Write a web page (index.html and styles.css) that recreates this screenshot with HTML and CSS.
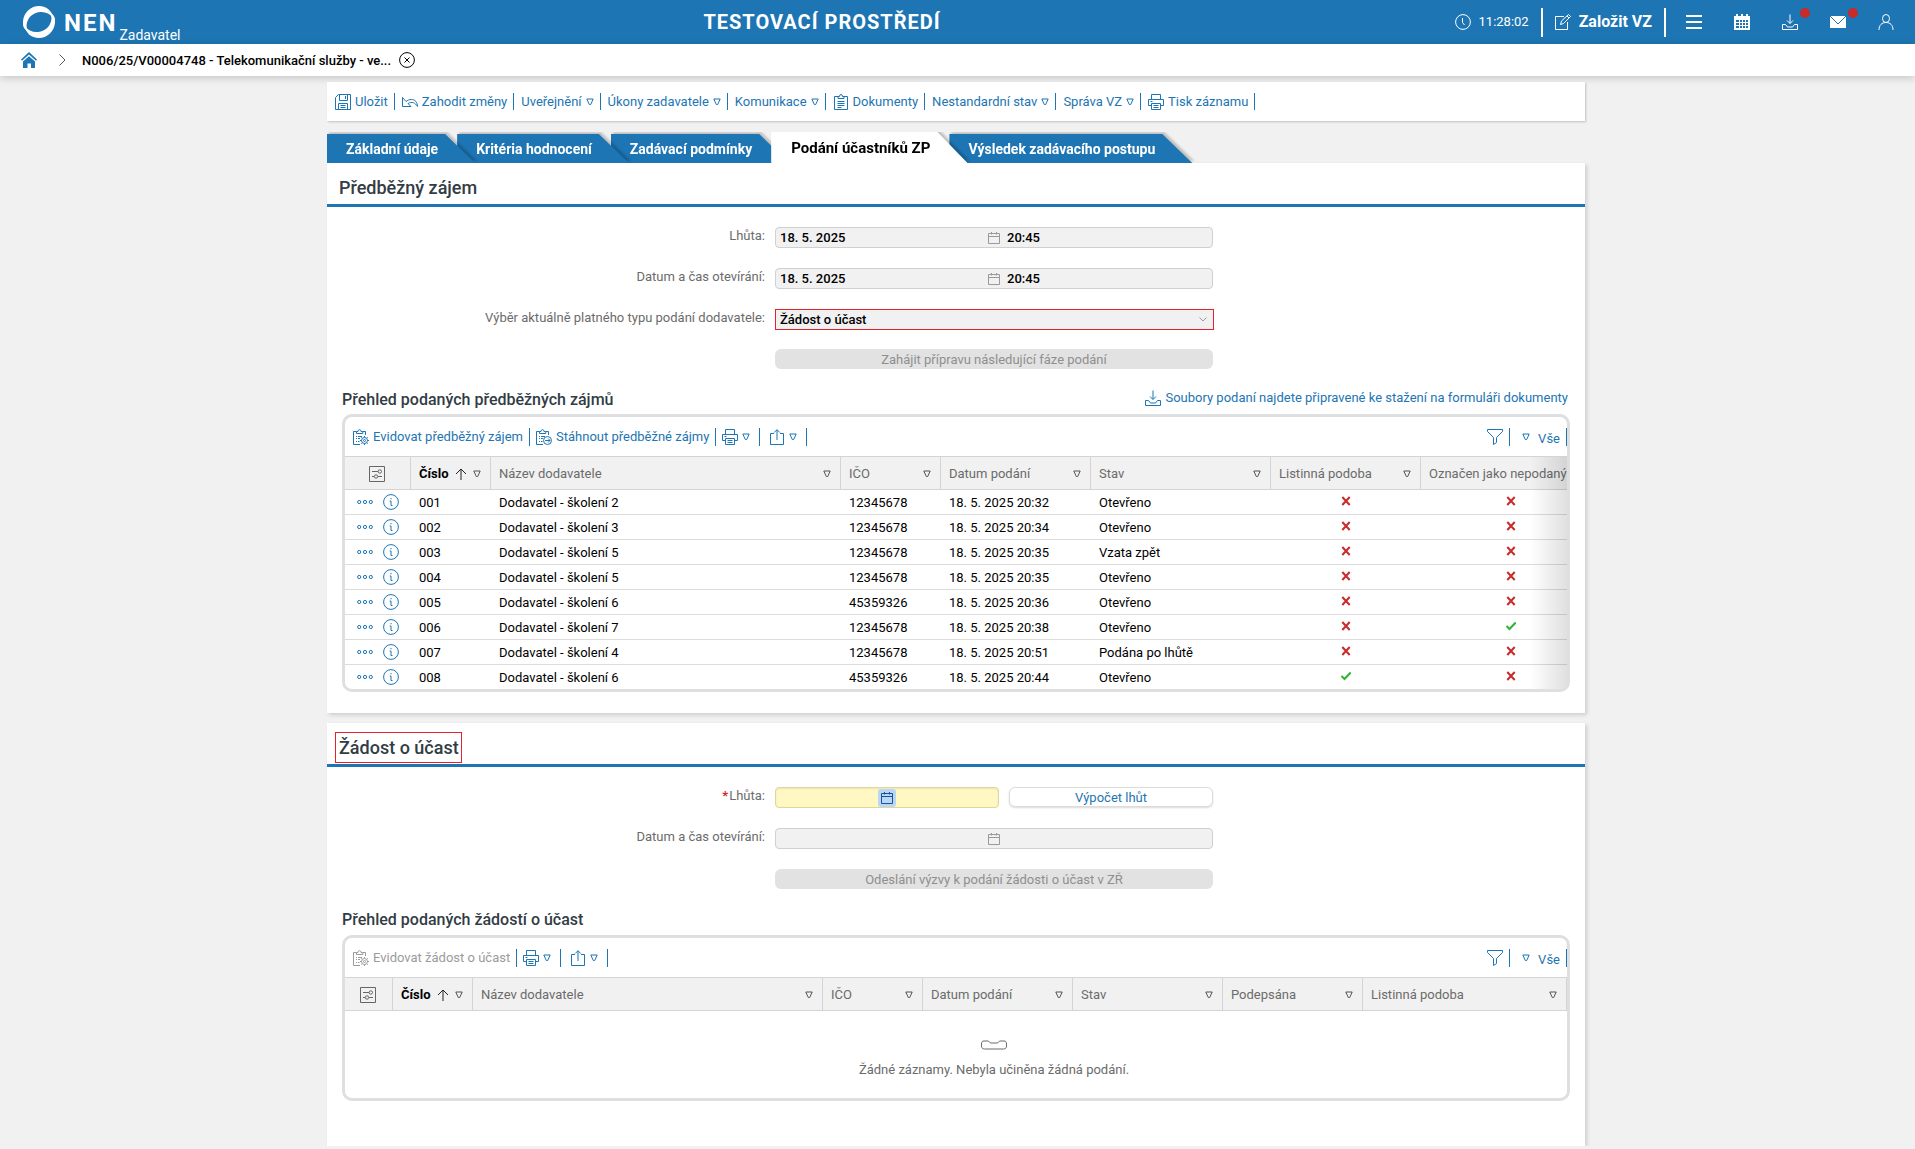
FILE: index.html
```html
<!DOCTYPE html>
<html lang="cs">
<head>
<meta charset="utf-8">
<meta name="viewport" content="width=device-width, initial-scale=1">
<title>NEN – Podání účastníků ZP</title>
<link rel="stylesheet" href="styles.css">
</head>
<body>
<svg class="sprite" aria-hidden="true">
  <symbol id="tri" viewBox="0 0 8 8"><path d="M.8 1h6.4L4.7 6.5H3.3z"/></symbol>
  <symbol id="save" viewBox="0 0 16 16"><path d="M3.500.5h12v15H.5V3.500zM4.500 1v5.500h8V1M10.500 2v3M3.500 15.500v-6h9v6M5.500 11.500h5M5.500 13.500h5"/></symbol>
  <symbol id="undo" viewBox="0 0 16 16"><path d="M.5 3.500v9h8.500L6 9.500c4-2.200 7-1 9.500 3C15.300 8 13 5.500 9.500 5.500c-2.200 0-4 .8-5.500 2z"/></symbol>
  <symbol id="clip" viewBox="0 0 14 16"><path d="M4 2.500H.5v13h13v-13H10M4 4.500v-2h1.500a1.500 2 0 0 1 3 0H10v2zM3.500 7.500h7M3.500 9.500h7M3.500 11.500h7M3.500 13.500h4"/></symbol>
  <symbol id="print" viewBox="0 0 16 16"><path d="M3.500 5V.5h9V5M3.500 11.500h-3V5.500h15v6h-3M3.500 9.500h9v6h-9zM5.500 11.500h5M5.500 13.500h5M2.500 7.500h2"/></symbol>
  <symbol id="clipgear" viewBox="0 0 16 16"><path d="M3.500 2.500h-3v13H7M10 2.500h2.500V6M3.500 4.500v-2H5a1.500 1.800 0 0 1 3 0h1.800v2zM3 7.500h1M5 7.500h4M3 9.500h1M5 9.500h2M3 12.500h1M5 12.500h1.500"/><circle cx="11.500" cy="11.500" r="3"/><circle cx="11.500" cy="11.500" r="1"/><path d="M11.500 7v1.500M11.500 14.500V16M7 11.500h1.500M14.500 11.500H16M8.300 8.300l1 1M13.700 13.700l1 1M14.700 8.300l-1 1M9.300 13.700l-1 1"/></symbol>
  <symbol id="cliparrow" viewBox="0 0 16 16"><path d="M3.500 2.500h-3v13H7M10 2.500h2.500V6M3.500 4.500v-2H5a1.500 1.800 0 0 1 3 0h1.800v2zM3 7.500h1M5 7.500h4M3 9.500h1M5 9.500h2M3 12.500h1M5 12.500h1.500"/><circle cx="11.500" cy="11.500" r="4"/><path d="M9 11.500h5M12 9.500l2 2-2 2"/></symbol>
  <symbol id="share" viewBox="0 0 14 16"><path d="M4 4.500H.5v11h13v-11H10M7 11V.8M4.200 3.500L7 .7l2.800 2.800"/></symbol>
  <symbol id="filter" viewBox="0 0 16 16"><path d="M.5.500h15v2L9.500 8.500v5l-3 2v-7L.5 2.500z"/></symbol>
  <symbol id="cols" viewBox="0 0 16 16"><path d="M.5.500h15v15H.5zM3 5.500h6M3 10.500h2M9 10.500h4"/><circle cx="10.800" cy="5.500" r="1.700"/><circle cx="7" cy="10.500" r="1.700"/></symbol>
  <symbol id="up" viewBox="0 0 12 12"><path d="M6 12V1M1 6l5-5 5 5"/></symbol>
  <symbol id="dots" viewBox="0 0 16 6"><circle cx="2.200" cy="3" r="1.600"/><circle cx="8" cy="3" r="1.600"/><circle cx="13.800" cy="3" r="1.600"/></symbol>
  <symbol id="info" viewBox="0 0 16 16"><circle cx="8" cy="8" r="7.400"/><path d="M8 4v1.300M6.700 7H8v4.500h1.500"/></symbol>
  <symbol id="cal" viewBox="0 0 12 12"><path d="M.5 1.500h11v10H.5zM.5 4.500h11M3.500 0v2.500M8.500 0v2.500"/></symbol>
  <symbol id="x" viewBox="0 0 10 10"><path d="M1.300 1l7.400 8M8.700 1L1.300 9"/></symbol>
  <symbol id="ok" viewBox="0 0 10 10"><path d="M.5 5l3 3L9.700 1.500"/></symbol>
  <symbol id="dl" viewBox="0 0 16 16"><path d="M8 .5v8.800M5 6.500l3 3 3-3M3.500 10.500h-3v5h15v-5h-3l-2 2.500h-5z"/></symbol>
</svg>

<header class="top">
  <a class="brand" href="#">
    <svg class="logo" viewBox="0 0 32 32"><path d="M0 19C-1 8 7 0 16 0c8 0 13 5 14.500 12C27 7.500 22 5.500 17 6 9 7 4.500 12 3.500 19c0 2 .5 4 1.500 6-3-1-4.500-3-5-6z"/><path d="M32 13c1 11-7 19-16 19-8 0-13-5-14.500-12C5 24.500 10 26.500 15 26c8-1 12.500-6 13.500-13 0-2-.5-4-1.500-6 3 1 4.500 3 5 6z"/></svg>
    <span class="name">NEN</span><span class="role">Zadavatel</span>
  </a>
  <strong class="env">TESTOVACÍ PROSTŘEDÍ</strong>
  <div class="tools">
    <span class="clock"><svg class="i16" viewBox="0 0 16 16"><circle cx="8" cy="8" r="7.400"/><path d="M7.500 4v4.500L9.500 11"/></svg><time>11:28:02</time></span>
    <button class="create"><svg class="i16" viewBox="0 0 16 16"><path d="M9 2.500H.5v13h12V8M5.500 10.500l1-3.500 7-6.500 2 2-7 7zM12 2l2 2"/></svg>Založit VZ</button>
    <button class="ic" aria-label="Menu"><svg class="i16 thick" viewBox="0 0 16 16"><path d="M0 2h16M0 8h16M0 14h16"/></svg></button>
    <button class="ic" aria-label="Kalendář"><svg class="i16" viewBox="0 0 16 16"><path class="solid" fill-rule="evenodd" d="M0 2h2V0h2v2h3V0h2v2h3V0h2v2h2v14H0zm2 4v8h12V6z"/><path d="M2 8.500h12M2 11.500h12M5.500 6v8M8.500 6v8M11.500 6v8"/></svg></button>
    <button class="ic" aria-label="Stažené soubory"><svg class="i16"><use href="#dl"/></svg><i class="badge"></i></button>
    <button class="ic" aria-label="Zprávy"><svg class="i16 wide" viewBox="0 0 18 16"><path class="solid" d="M1 2h16v12H1z"/><path class="flap" d="M1 2l8 8 8-8"/></svg><i class="badge"></i></button>
    <button class="ic" aria-label="Uživatel"><svg class="i16" viewBox="0 0 16 16"><ellipse cx="8" cy="4.500" rx="3.500" ry="4"/><path d="M1 16c0-5 3-7.500 7-7.500s7 2.500 7 7.500"/></svg></button>
  </div>
</header>

<nav class="crumbs" aria-label="Navigace">
  <a href="#" aria-label="Domů"><svg class="home" viewBox="0 0 16 16"><path d="M0 7.500L8 0l8 7.500-1 1.300L8 2.500 1 8.800zM2 9.500l6-5.200 6 5.200V16h-4v-4.500H6.500V16H2z"/></svg></a>
  <svg class="chev" viewBox="0 0 7 12"><path d="M.5.500L6 6 .5 11.500"/></svg>
  <a class="record" href="#">N006/25/V00004748 - Telekomunikační služby - ve...</a>
  <button class="close" aria-label="Zavřít"><svg viewBox="0 0 16 16"><circle cx="8" cy="8" r="7.400"/><path d="M5.500 5.500l5 5M10.500 5.500l-5 5"/></svg></button>
</nav>

<div class="wrap">
<main class="page">
  <div class="bar">
    <button><svg class="i16"><use href="#save"/></svg>Uložit</button>
    <button><svg class="i16"><use href="#undo"/></svg>Zahodit změny</button>
    <button>Uveřejnění<svg class="tri"><use href="#tri"/></svg></button>
    <button>Úkony zadavatele<svg class="tri"><use href="#tri"/></svg></button>
    <button>Komunikace<svg class="tri"><use href="#tri"/></svg></button>
    <button><svg class="i16"><use href="#clip"/></svg>Dokumenty</button>
    <button>Nestandardní stav<svg class="tri"><use href="#tri"/></svg></button>
    <button>Správa VZ<svg class="tri"><use href="#tri"/></svg></button>
    <button><svg class="i16"><use href="#print"/></svg>Tisk záznamu</button>
  </div>

  <nav class="tabs" aria-label="Záložky">
    <div class="tab t1"><a href="#">Základní údaje</a></div>
    <div class="tab t2"><a href="#">Kritéria hodnocení</a></div>
    <div class="tab t3"><a href="#">Zadávací podmínky</a></div>
    <div class="tab active"><a href="#" aria-current="page">Podání účastníků ZP</a></div>
    <div class="tab"><a href="#">Výsledek zadávacího postupu</a></div>
  </nav>

  <section class="panel">
    <h2><span>Předběžný zájem</span></h2>
    <form class="form">
      <label for="p-date">Lhůta:</label>
      <div class="field"><input id="p-date" value="18. 5. 2025" readonly><svg class="cal"><use href="#cal"/></svg><input aria-label="Lhůta – čas" value="20:45" readonly></div>
      <label for="p-open">Datum a čas otevírání:</label>
      <div class="field"><input id="p-open" value="18. 5. 2025" readonly><svg class="cal"><use href="#cal"/></svg><input aria-label="Otevírání – čas" value="20:45" readonly></div>
      <label for="p-type">Výběr aktuálně platného typu podání dodavatele:</label>
      <div class="select"><select id="p-type"><option>Žádost o účast</option></select><svg viewBox="0 0 8 5"><path d="M.5.500L4 4 7.500.500"/></svg></div>
      <button type="button" class="off" disabled>Zahájit přípravu následující fáze podání</button>
    </form>

    <div class="title"><h3>Přehled podaných předběžných zájmů</h3><a href="#"><svg class="i16"><use href="#dl"/></svg>Soubory podaní najdete připravené ke stažení na formuláři dokumenty</a></div>
    <div class="grid fade">
      <div class="gbar">
        <button><svg class="i16"><use href="#clipgear"/></svg>Evidovat předběžný zájem</button>
        <button><svg class="i16"><use href="#cliparrow"/></svg>Stáhnout předběžné zájmy</button>
        <button class="menu" aria-label="Tisk"><svg class="i16"><use href="#print"/></svg><svg class="tri"><use href="#tri"/></svg></button>
        <button class="menu" aria-label="Export"><svg class="i16"><use href="#share"/></svg><svg class="tri"><use href="#tri"/></svg></button>
        <button class="filter" aria-label="Filtr"><svg class="i16"><use href="#filter"/></svg></button>
        <button class="all"><svg class="tri"><use href="#tri"/></svg><span>Vše</span></button>
      </div>
      <table class="wide">
        <colgroup><col class="w66"><col class="w80"><col class="w350"><col class="w100"><col class="w150"><col class="w180"><col class="w150"><col class="w180"></colgroup>
        <thead><tr>
          <th><button aria-label="Nastavení sloupců"><svg class="i16"><use href="#cols"/></svg></button></th>
          <th class="sorted"><div>Číslo<svg class="up"><use href="#up"/></svg><svg class="tri"><use href="#tri"/></svg></div></th>
          <th><div>Název dodavatele<svg class="tri"><use href="#tri"/></svg></div></th>
          <th><div>IČO<svg class="tri"><use href="#tri"/></svg></div></th>
          <th><div>Datum podání<svg class="tri"><use href="#tri"/></svg></div></th>
          <th><div>Stav<svg class="tri"><use href="#tri"/></svg></div></th>
          <th><div>Listinná podoba<svg class="tri"><use href="#tri"/></svg></div></th>
          <th><div>Označen jako nepodaný</div></th>
        </tr></thead>
        <tbody>
          <tr><td class="act"><svg class="dots"><use href="#dots"/></svg><svg class="i16"><use href="#info"/></svg></td><td>001</td><td>Dodavatel - školení 2</td><td>12345678</td><td>18. 5. 2025 20:32</td><td>Otevřeno</td><td class="flag"><svg class="no"><use href="#x"/></svg></td><td class="flag"><svg class="no"><use href="#x"/></svg></td></tr>
          <tr><td class="act"><svg class="dots"><use href="#dots"/></svg><svg class="i16"><use href="#info"/></svg></td><td>002</td><td>Dodavatel - školení 3</td><td>12345678</td><td>18. 5. 2025 20:34</td><td>Otevřeno</td><td class="flag"><svg class="no"><use href="#x"/></svg></td><td class="flag"><svg class="no"><use href="#x"/></svg></td></tr>
          <tr><td class="act"><svg class="dots"><use href="#dots"/></svg><svg class="i16"><use href="#info"/></svg></td><td>003</td><td>Dodavatel - školení 5</td><td>12345678</td><td>18. 5. 2025 20:35</td><td>Vzata zpět</td><td class="flag"><svg class="no"><use href="#x"/></svg></td><td class="flag"><svg class="no"><use href="#x"/></svg></td></tr>
          <tr><td class="act"><svg class="dots"><use href="#dots"/></svg><svg class="i16"><use href="#info"/></svg></td><td>004</td><td>Dodavatel - školení 5</td><td>12345678</td><td>18. 5. 2025 20:35</td><td>Otevřeno</td><td class="flag"><svg class="no"><use href="#x"/></svg></td><td class="flag"><svg class="no"><use href="#x"/></svg></td></tr>
          <tr><td class="act"><svg class="dots"><use href="#dots"/></svg><svg class="i16"><use href="#info"/></svg></td><td>005</td><td>Dodavatel - školení 6</td><td>45359326</td><td>18. 5. 2025 20:36</td><td>Otevřeno</td><td class="flag"><svg class="no"><use href="#x"/></svg></td><td class="flag"><svg class="no"><use href="#x"/></svg></td></tr>
          <tr><td class="act"><svg class="dots"><use href="#dots"/></svg><svg class="i16"><use href="#info"/></svg></td><td>006</td><td>Dodavatel - školení 7</td><td>12345678</td><td>18. 5. 2025 20:38</td><td>Otevřeno</td><td class="flag"><svg class="no"><use href="#x"/></svg></td><td class="flag"><svg class="yes"><use href="#ok"/></svg></td></tr>
          <tr><td class="act"><svg class="dots"><use href="#dots"/></svg><svg class="i16"><use href="#info"/></svg></td><td>007</td><td>Dodavatel - školení 4</td><td>12345678</td><td>18. 5. 2025 20:51</td><td>Podána po lhůtě</td><td class="flag"><svg class="no"><use href="#x"/></svg></td><td class="flag"><svg class="no"><use href="#x"/></svg></td></tr>
          <tr><td class="act"><svg class="dots"><use href="#dots"/></svg><svg class="i16"><use href="#info"/></svg></td><td>008</td><td>Dodavatel - školení 6</td><td>45359326</td><td>18. 5. 2025 20:44</td><td>Otevřeno</td><td class="flag"><svg class="yes"><use href="#ok"/></svg></td><td class="flag"><svg class="no"><use href="#x"/></svg></td></tr>
        </tbody>
      </table>
    </div>
  </section>

  <section class="panel last">
    <h2><span class="marked">Žádost o účast</span></h2>
    <form class="form">
      <label for="z-date"><b>*</b>Lhůta:</label>
      <div class="pair">
        <div class="field required"><input id="z-date"><svg class="cal"><use href="#cal"/></svg><input aria-label="Lhůta – čas"></div>
        <button type="button" class="calc">Výpočet lhůt</button>
      </div>
      <label for="z-open">Datum a čas otevírání:</label>
      <div class="field"><input id="z-open" readonly><svg class="cal"><use href="#cal"/></svg><input aria-label="Otevírání – čas" readonly></div>
      <button type="button" class="off" disabled>Odeslání výzvy k podání žádosti o účast v ZŘ</button>
    </form>

    <div class="title"><h3>Přehled podaných žádostí o účast</h3></div>
    <div class="grid">
      <div class="gbar">
        <button disabled><svg class="i16"><use href="#clipgear"/></svg>Evidovat žádost o účast</button>
        <button class="menu" aria-label="Tisk"><svg class="i16"><use href="#print"/></svg><svg class="tri"><use href="#tri"/></svg></button>
        <button class="menu" aria-label="Export"><svg class="i16"><use href="#share"/></svg><svg class="tri"><use href="#tri"/></svg></button>
        <button class="filter" aria-label="Filtr"><svg class="i16"><use href="#filter"/></svg></button>
        <button class="all"><svg class="tri"><use href="#tri"/></svg><span>Vše</span></button>
      </div>
      <table>
        <colgroup><col class="w48"><col class="w80"><col class="w350"><col class="w100"><col class="w150"><col class="w150"><col class="w140"><col></colgroup>
        <thead><tr>
          <th><button aria-label="Nastavení sloupců"><svg class="i16"><use href="#cols"/></svg></button></th>
          <th class="sorted"><div>Číslo<svg class="up"><use href="#up"/></svg><svg class="tri"><use href="#tri"/></svg></div></th>
          <th><div>Název dodavatele<svg class="tri"><use href="#tri"/></svg></div></th>
          <th><div>IČO<svg class="tri"><use href="#tri"/></svg></div></th>
          <th><div>Datum podání<svg class="tri"><use href="#tri"/></svg></div></th>
          <th><div>Stav<svg class="tri"><use href="#tri"/></svg></div></th>
          <th><div>Podepsána<svg class="tri"><use href="#tri"/></svg></div></th>
          <th><div>Listinná podoba<svg class="tri"><use href="#tri"/></svg></div></th>
        </tr></thead>
      </table>
      <div class="empty">
        <svg viewBox="0 0 26 10"><path d="M3 1h4c1 0 1.500 2 3 2h6c1.500 0 2-2 3-2h4c2 0 2.500 1 2.500 3v2c0 2-1 3-3 3H3.500c-2 0-3-1-3-3V4C.5 2 1 1 3 1z"/></svg>
        <p>Žádné záznamy. Nebyla učiněna žádná podání.</p>
      </div>
    </div>
  </section>
</main>
</div>
</body>
</html>
```

FILE: styles.css
```css
:root {
  --blue: #1d75b3;
  --line: #d4d4d4;
  --frame: #dddfe0;
  --muted: #6b6b6b;
  --bg: #f1f1f1;
}

* { box-sizing: border-box; }

body {
  margin: 0;
  background: var(--bg);
  color: #000;
  font: 13px/16px Roboto, "Liberation Sans", sans-serif;
}

a { color: var(--blue); text-decoration: none; }
h2, h3, p { margin: 0; }
button, input, select { font: inherit; color: inherit; }
button { margin: 0; padding: 0; border: 0; background: none; color: var(--blue); white-space: nowrap; }
svg { display: block; flex: none; fill: none; stroke: currentColor; stroke-width: 1; }

.sprite { position: absolute; width: 0; height: 0; }
.i16 { width: 16px; height: 16px; }
.tri { width: 8px; height: 8px; }

/* Top bar */
.top {
  display: flex;
  align-items: center;
  justify-content: space-between;
  height: 44px;
  padding: 0 21px 0 23px;
  background: var(--blue);
  color: #fff;
}
.top button { color: #fff; }
.brand { display: flex; align-items: center; height: 44px; color: #fff; }
.logo { width: 32px; height: 32px; margin-right: 9px; fill: #fff; stroke: none; }
.name { padding-top: 2px; font-size: 24px; line-height: 28px; font-weight: 700; letter-spacing: 2px; }
.role { align-self: flex-end; padding: 0 0 2px 2px; font-size: 14px; line-height: 14px; }
.env { padding-left: 9px; font-size: 20px; line-height: 24px; letter-spacing: 1px; }
.tools { display: flex; align-items: center; }
.clock { display: flex; align-items: center; gap: 8px; padding-right: 12px; }
.create {
  display: flex;
  align-items: center;
  gap: 8px;
  height: 29px;
  margin-right: 20px;
  padding: 0 12px;
  border: solid #fff;
  border-width: 0 2px;
  font-size: 16px;
  font-weight: 700;
}
.ic { position: relative; margin-left: 32px; }
.create + .ic { margin-left: 0; }
.thick { stroke-width: 2; }
.wide.i16 { width: 18px; margin: 0 -1px; }
.solid { fill: #fff; stroke: none; }
.flap { stroke: var(--blue); }
.badge { position: absolute; top: -6px; right: -12px; width: 10px; height: 10px; border-radius: 50%; background: #c92a2a; }

/* Breadcrumbs */
.crumbs {
  display: flex;
  align-items: center;
  height: 32px;
  padding: 0 21px;
  background: #fff;
  box-shadow: 0 2px 8px rgba(0, 0, 0, .18);
}
.home { width: 16px; height: 16px; fill: var(--blue); stroke: none; }
.chev { width: 7px; height: 12px; margin: 0 16px 0 22px; color: #555; }
.record { padding-top: 1px; color: #000; font-weight: 500; }
.close { margin-left: 8px; color: #000; }
.close svg { width: 16px; height: 16px; }

/* Page column */
.wrap { padding: 6px 3px 0 0; }
.page { max-width: 1258px; margin: 0 auto; }

.bar, .gbar { display: flex; align-items: center; }
.bar button, .gbar button { display: flex; align-items: center; gap: 4px; height: 17px; border-right: 1px solid var(--blue); }
.bar { height: 39px; padding: 0 0 0 8px; background: #fff; box-shadow: 1px 1px 2px rgba(0, 0, 0, .2); }
.bar button { padding-right: 6px; }
.bar button + button { padding-left: 7px; }

/* Tabs */
.tabs { display: flex; align-items: flex-end; height: 31px; margin-top: 11px; overflow: hidden; }
.tab { position: relative; margin-right: -18px; filter: drop-shadow(2px -2px 1px rgba(0, 0, 0, .2)); }
.tab a {
  display: block;
  height: 29px;
  padding: 0 37px 0 19px;
  background: var(--blue);
  clip-path: polygon(0 0, calc(100% - 30px) 0, 100% 100%, 0 100%);
  color: #fff;
  font-size: 14px;
  line-height: 31px;
  font-weight: 700;
}
.tab.t1 { z-index: 3; }
.tab.t2 { z-index: 2; }
.tab.t3 { z-index: 1; }
.tab.active { z-index: 4; }
.tab.active a { height: 31px; padding-left: 20px; background: #fff; color: #000; font-size: 15px; line-height: 32px; }

/* Panels */
.panel { margin-bottom: 10px; padding-bottom: 21px; background: #fff; box-shadow: 2px 2px 4px rgba(0, 0, 0, .15); }
.panel.last { margin-bottom: 0; padding-bottom: 45px; }
h2 {
  display: flex;
  align-items: center;
  height: 44px;
  padding: 7px 8px 0;
  border-bottom: 3px solid var(--blue);
  color: #323c44;
  font-size: 18px;
  line-height: 28px;
  font-weight: 500;
}
h2 span { padding: 1px 2px 0 3px; border: 1px solid transparent; }
h2 .marked { border-color: #e4222b; }

.form { display: grid; grid-template-columns: 448fr 438fr 372fr; row-gap: 20px; padding-top: 20px; }
.form > * { grid-column: 2; }
.form > label { grid-column: 1; padding: 1px 10px 0 0; text-align: right; color: var(--muted); }
label b { padding-right: 1px; color: #c92a2a; }

.field {
  display: grid;
  grid-template-columns: 1fr 18px 1fr;
  align-items: center;
  height: 21px;
  border: 1px solid #d0d0d0;
  border-radius: 4px;
  background: var(--bg);
  color: #999;
}
.field input { width: 100%; min-width: 0; height: 19px; padding: 0 4px; border: 0; outline: 0; background: none; color: #000; font-weight: 500; }
.cal { width: 12px; height: 12px; justify-self: center; }
.field.required { border-color: #dcd6a0; background: #fff8c2; box-shadow: inset 0 1px 2px rgba(0, 0, 0, .08); }
.required .cal { width: 18px; height: 18px; padding: 3px; border-radius: 3px; background: #bcd6f2; color: #0f55a5; }

.select { display: grid; align-items: center; height: 21px; margin: 0 -1px -1px 0; outline: 1px solid #e4222b; outline-offset: -1px; background: var(--bg); color: #999; }
.select select { grid-area: 1 / 1; width: 100%; height: 19px; padding: 0 5px; border: 0; appearance: none; background: none; color: #000; font-weight: 500; }
.select svg { grid-area: 1 / 1; justify-self: end; width: 8px; height: 5px; margin-right: 7px; }

.off { height: 20px; padding-top: 1px; border-radius: 6px; background: #e2e2e2; color: #8f8f8f; }
.pair { display: grid; grid-template-columns: 224fr 204fr; gap: 10px; }
.calc { height: 20px; padding-top: 1px; border: 1px solid #ddd; border-radius: 6px; background: #fff; box-shadow: 0 1px 2px rgba(0, 0, 0, .15); }

.title { display: flex; justify-content: space-between; align-items: center; height: 45px; padding: 13px 17px 0 15px; }
.last .title { height: 46px; }
h3 { padding-top: 3px; color: #323c44; font-size: 16px; line-height: 20px; font-weight: 500; }
.title a { display: flex; align-items: center; gap: 4px; }

/* Data grids */
.grid { position: relative; margin: 0 15px; border: 3px solid var(--frame); border-radius: 10px; overflow: hidden; }
.gbar { height: 39px; padding: 1px 0 0 8px; }
.gbar button { height: 18px; padding-right: 6px; margin-right: 6px; }
.gbar button:disabled { color: #9b9b9b; }
.gbar .menu { padding-right: 9px; }
.gbar .menu + .menu { padding-left: 3px; }
.gbar .filter { margin: 0 0 0 auto; padding-right: 6px; }
.gbar .all { gap: 8px; margin: 0; padding-left: 12px; }
.all span { padding-top: 4px; }

table { width: 100%; table-layout: fixed; border-collapse: separate; border-spacing: 0; }
table.wide { width: 1256px; }
.w48 { width: 48px; }
.w66 { width: 66px; }
.w80 { width: 80px; }
.w100 { width: 100px; }
.w140 { width: 140px; }
.w150 { width: 150px; }
.w180 { width: 180px; }
.w350 { width: 350px; }
th { height: 34px; padding: 1px 9px 0 8px; border: solid var(--line); border-width: 1px 1px 1px 0; background: var(--bg); color: var(--muted); font-weight: 400; text-align: left; white-space: nowrap; }
th button { display: flex; margin: 0 auto; color: #666; }
th div { display: flex; align-items: center; justify-content: space-between; }
th.sorted { color: #000; font-weight: 700; }
.up { width: 12px; height: 12px; color: #222; }
th .tri { color: #555; }
td { height: 25px; padding: 1px 8px 0; border-bottom: 1px solid #dcdcdc; white-space: nowrap; }
tbody tr:last-child td { height: 24px; border-bottom: 0; }
td svg { display: inline-block; vertical-align: middle; }
.act { padding: 0 0 0 12px; color: var(--blue); font-size: 0; }
.dots { width: 16px; height: 6px; margin-right: 10px; }
.flag { padding: 0 8px 2px; text-align: center; font-size: 0; line-height: 10px; }
.flag svg { width: 10px; height: 10px; stroke-width: 2; }
.no { color: #c92a2a; }
.yes { color: #2fb535; }
.fade::after { content: ""; position: absolute; top: 40px; right: 0; bottom: 0; width: 37px; background: linear-gradient(to right, transparent, rgba(0, 0, 0, .12)); }

.empty { display: flex; flex-direction: column; align-items: center; gap: 12px; height: 87px; padding: 29px 0 0 76px; color: var(--muted); }
.empty svg { width: 26px; height: 10px; }
```
